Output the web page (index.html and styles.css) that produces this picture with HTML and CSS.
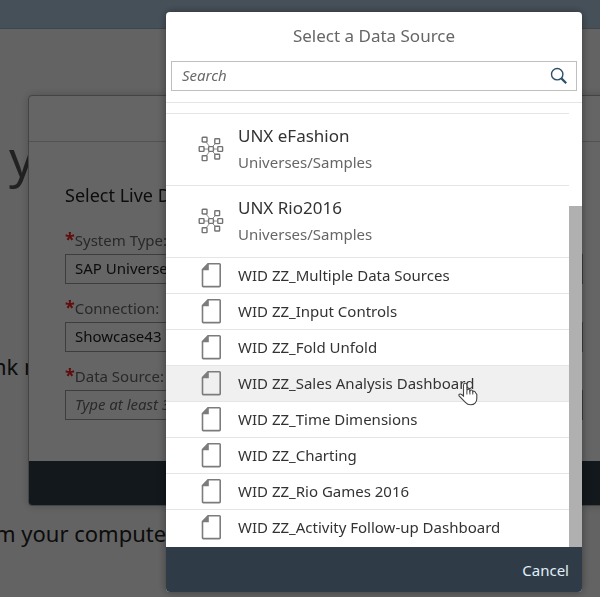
FILE: index.html
```html
<!DOCTYPE html>
<html lang="en">
<head>
<meta charset="utf-8">
<title>Select a Data Source</title>
<link rel="stylesheet" href="styles.css">
</head>
<body>
<svg class="sprite" aria-hidden="true">
  <symbol id="universe" viewBox="0 0 26 26">
    <g fill="none" stroke="#8a8a8a" stroke-width="1"><path d="M8 6l4 5M18 7l-4 4M6 13h5M15 13h4M12 15l-4 5M14 15l4 4"/></g>
    <g fill="#fff" stroke="#737373" stroke-width="1.4"><rect x="4.2" y="1.2" width="4.8" height="4.8" rx=".6"/><rect x="16.8" y="2.8" width="4.8" height="4.8" rx=".6"/><rect x="1.2" y="10.6" width="4.8" height="4.8" rx=".6"/><rect x="10.6" y="10.6" width="4.8" height="4.8" rx=".6"/><rect x="19.8" y="10.6" width="4.8" height="4.8" rx=".6"/><rect x="4.2" y="19.8" width="4.8" height="4.8" rx=".6"/><rect x="16.8" y="18.2" width="4.8" height="4.8" rx=".6"/></g>
  </symbol>
  <symbol id="document" viewBox="0 0 26 26">
    <path d="M10 1.8H21.4Q22.2 1.8 22.2 2.6V23.8Q22.2 24.6 21.4 24.6H5.3Q4.5 24.6 4.5 23.8V7.5Z" fill="none" stroke="#7c7c7c" stroke-width="1.6"/>
    <path d="M10.8 1.5V8.2H4L4.5 7Z" fill="#7c7c7c"/>
  </symbol>
</svg>

<div class="page">
  <header class="shell"></header>
  <h1 class="headline">y</h1>
  <p class="link-text">nk m</p>
  <p class="upload-text">m your computer</p>
</div>

<div class="layer layer-back">
  <section class="panel">
    <div class="panel-head"></div>
    <form class="panel-body">
      <h2>Select Live Data</h2>
      <label for="system"><span>*</span>System Type:</label>
      <input id="system" value="SAP Universe">
      <label for="connection"><span>*</span>Connection:</label>
      <input id="connection" value="Showcase43">
      <label for="source"><span>*</span>Data Source:</label>
      <input id="source" placeholder="Type at least 3 characters">
    </form>
    <div class="panel-foot"></div>
  </section>
</div>

<div class="layer layer-front">
  <section class="dialog" role="dialog" aria-labelledby="title">
    <h2 class="dialog-title" id="title">Select a Data Source</h2>
    <div class="search">
      <input type="text" placeholder="Search" aria-label="Search">
      <button type="button" aria-label="Search">
        <svg width="18" height="18" viewBox="0 0 18 18" fill="none" stroke="#2c5068"><circle cx="7.2" cy="7.2" r="5.7" stroke-width="1.4"/><path d="M11.4 11.4L16.2 16.2" stroke-width="2.2"/></svg>
      </button>
    </div>
    <div class="scroll">
      <ul class="list">
        <li class="tail"></li>
        <li class="tall"><svg><use href="#universe"/></svg><div><strong>UNX eFashion</strong><small>Universes/Samples</small></div></li>
        <li class="tall"><svg><use href="#universe"/></svg><div><strong>UNX Rio2016</strong><small>Universes/Samples</small></div></li>
        <li><svg><use href="#document"/></svg>WID ZZ_Multiple Data Sources</li>
        <li><svg><use href="#document"/></svg>WID ZZ_Input Controls</li>
        <li><svg><use href="#document"/></svg>WID ZZ_Fold Unfold</li>
        <li class="hovered"><svg><use href="#document"/></svg><span class="pointed">WID ZZ_Sales Analysis Dashboard
          <svg class="hand" viewBox="0 0 20 24"><path d="M5.5 14V3.2Q5.5 1.3 7.2 1.3T8.9 3.2V8.6Q9 7.2 10.3 7.2T11.9 8.8Q12.2 7.9 13.3 8T14.8 9.6Q15.2 9 16.2 9.2T17.8 11L18.8 12.4V16.5Q18.8 19 17.3 20.8Q15.5 22.8 12.7 22.8Q9.5 22.8 7.4 20.4L1.1 13.8Q.5 12.8 1.5 12.2T3.9 12.7Z" fill="#fff" stroke="#444" stroke-width="1.1"/><path d="M8.9 8.5V12.5M11.9 8.8V12.5M14.8 9.6V12.5" fill="none" stroke="#444"/></svg></span></li>
        <li><svg><use href="#document"/></svg>WID ZZ_Time Dimensions</li>
        <li><svg><use href="#document"/></svg>WID ZZ_Charting</li>
        <li><svg><use href="#document"/></svg>WID ZZ_Rio Games 2016</li>
        <li><svg><use href="#document"/></svg>WID ZZ_Activity Follow-up Dashboard</li>
      </ul>
      <div class="track"><div class="thumb"></div></div>
    </div>
    <footer class="dialog-foot"><button type="button">Cancel</button></footer>
  </section>
</div>
</body>
</html>
```
FILE: styles.css
```css
* { box-sizing: border-box; }
body {
  margin: 0;
  height: 100vh;
  overflow: hidden;
  background: #f7f7f7;
  color: #222;
  font: 15px/20px "Noto Sans", "Open Sans", sans-serif;
}
h1, h2, p, ul { margin: 0; padding: 0; font-weight: 400; }
input, button { font: inherit; color: inherit; margin: 0; }
.sprite { position: absolute; width: 0; height: 0; }

.page { white-space: nowrap; }
.shell { height: 29px; background: #b0c9de; border-bottom: 1px solid #9bb0be; }
.headline { padding: 93px 0 0 9px; font-size: 50px; line-height: 72px; color: #555; }
.link-text, .upload-text { font-size: 22px; line-height: 32px; }
.link-text { margin: 156px 0 0 -7px; }
.upload-text { margin: 135px 0 0 -5px; }

.layer { position: fixed; inset: 0; display: flex; overflow: hidden; }
.layer-back { padding: 95px 0 91px 28px; }
.layer-front { padding: 12px 18px 5px 166px; background: rgba(0, 0, 0, .6); }

.panel {
  flex: 1;
  display: flex;
  flex-direction: column;
  margin-right: -20px;
  background: #fcfcfc;
  border: 1px solid #aaa;
  border-radius: 4px;
  overflow: hidden;
  box-shadow: 0 0 10px rgba(0, 0, 0, .2);
}
.panel-head { height: 46px; border-bottom: 1px solid #ccc; }
.panel-body { flex: 1; display: flex; flex-direction: column; padding: 39px 36px 0; }
.panel-body h2 { font-size: 18px; line-height: 28px; margin-bottom: 20px; }
.panel-body label { line-height: 22px; color: #666; }
.panel-body label span { color: #e22; font-weight: 700; font-size: 18px; line-height: 20px; }
.panel-body input {
  height: 30px;
  margin: 3px 0 13px;
  padding: 0 9px 2px;
  border: 1px solid #999;
  background: transparent;
}
.panel-foot { height: 44px; background: #2f3c48; }
::placeholder { color: #6a6a6a; font-style: italic; opacity: 1; }

.dialog {
  flex: 1;
  min-width: 0;
  display: flex;
  flex-direction: column;
  background: #fff;
  border-radius: 4px;
  overflow: hidden;
  box-shadow: 0 0 8px rgba(0, 0, 0, .4);
}
.dialog-title { padding: 12px 0 13px; font-size: 17px; line-height: 24px; text-align: center; color: #666; }
.search { display: flex; height: 30px; margin: 0 5px 11px; border: 1px solid #bfbfbf; }
.search input { flex: 1; min-width: 0; border: 0; padding: 0 10px 2px; background: none; }
.search button { display: flex; align-items: center; width: 26px; padding: 0; border: 0; background: none; }

.scroll { flex: 1; min-height: 0; display: flex; border-top: 1px solid #e5e5e5; }
.list { flex: 1; list-style: none; overflow: hidden; color: #333; }
.list li {
  display: flex;
  align-items: center;
  gap: 14px;
  height: 36px;
  padding: 0 0 2px 32px;
  border-bottom: 1px solid #e5e5e5;
  white-space: nowrap;
}
.list li:last-child { border-bottom-color: transparent; }
.list svg { flex: none; width: 26px; height: 26px; }
.list .tail { height: 11px; }
.list .tall { height: 72px; padding-bottom: 2px; }
.tall strong, .tall small { display: block; }
.tall strong { font-weight: 400; font-size: 17px; line-height: 26px; }
.tall small { font-size: 15px; line-height: 26px; color: #666; }
.list .hovered { background: #f0f0f0; }
.pointed { position: relative; }
.list .hand { position: absolute; right: -4px; top: 9px; width: 20px; height: 24px; }
.track { width: 13px; padding-top: 103px; background: #fff; }
.thumb { height: 100%; background: #b0b0b0; }

.dialog-foot { display: flex; justify-content: flex-end; height: 45px; background: #2f3c48; }
.dialog-foot button { padding: 0 13px; border: 0; background: none; color: #e0effa; }
```
